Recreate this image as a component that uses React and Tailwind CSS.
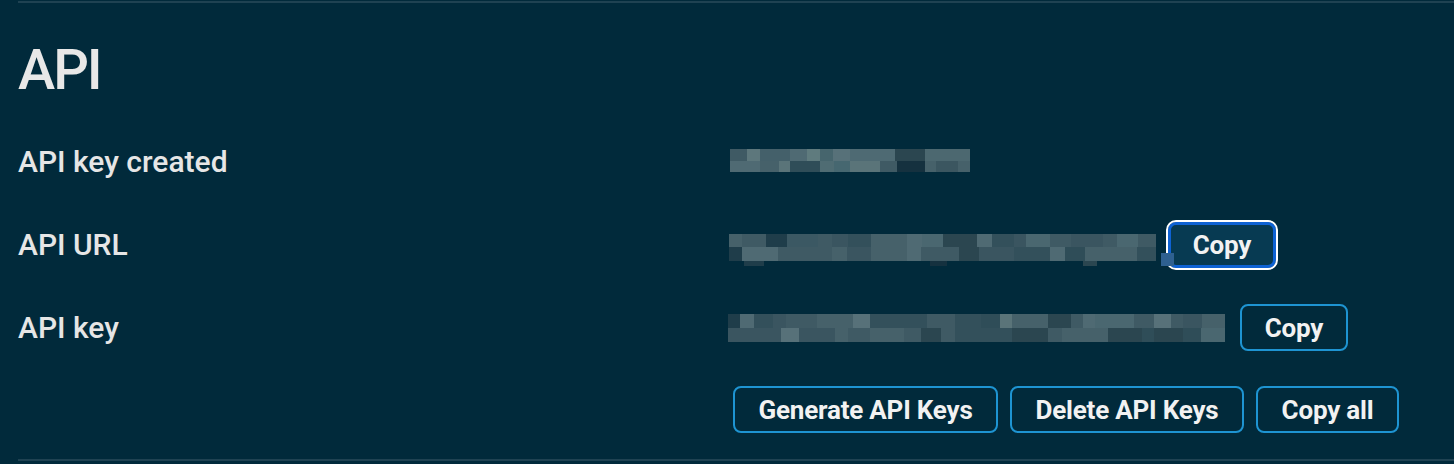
import React from "react";

const R1T = [[30,80,"#3f5a64"],[80,120,"#5d777c"],[120,210,"#44606a"],[210,260,"#4f6a73"],[260,300,"#5f7b7e"],[300,340,"#46656d"],[340,390,"#577179"],[390,525,"#4e6a73"],[525,615,"#2b4650"],[615,750,"#4c6870"]];
const R1B = [[30,120,"#4f6a73"],[120,177,"#46616a"],[177,210,"#5a7479"],[210,300,"#2f4d58"],[300,342,"#4f6c73"],[342,390,"#466770"],[390,480,"#5a7479"],[480,530,"#3f5a64"],[530,615,"#15313f"],[615,648,"#46616a"],[648,713,"#3b5660"],[713,750,"#46616a"]];

const R2T = [[24,63,"#46616a"],[63,135,"#3f5a64"],[135,198,"#1f3d4a"],[198,290,"#3b5863"],[290,333,"#3f5a64"],[333,380,"#3a5560"],[380,450,"#33505b"],[450,557,"#46616a"],[557,602,"#4f6a73"],[602,665,"#4a6770"],[665,768,"#2b4650"],[768,813,"#4f6a73"],[813,878,"#33505b"],[878,915,"#3a5560"],[915,987,"#4a6770"],[987,1050,"#3f5a64"],[1050,1145,"#3a5560"],[1145,1188,"#3f5a64"],[1188,1250,"#4a6770"],[1250,1305,"#3f5a64"]];
const R2B = [[24,63,"#1f3d4a"],[63,170,"#4f6a73"],[170,333,"#3f5a64"],[333,378,"#46616a"],[378,450,"#3a5560"],[450,557,"#46616a"],[557,600,"#4f6a73"],[600,715,"#3f5a64"],[715,773,"#2b4650"],[773,878,"#3a5560"],[878,987,"#33505b"],[987,1032,"#4f6a73"],[1032,1092,"#2f4d58"],[1092,1188,"#46616a"],[1188,1248,"#46616a"],[1248,1305,"#33505b"]];
const R2X = [[24,70,"transparent"],[70,128,"#1f3d4a"],[128,627,"transparent"],[627,677,"#15313f"],[677,1087,"transparent"],[1087,1127,"#2b4650"]];

const R3T = [[24,60,"#1f3d4a"],[60,102,"#4f6a73"],[102,158,"#33505b"],[158,198,"#3a5560"],[198,290,"#3f5a64"],[290,398,"#46616a"],[398,450,"#577179"],[450,620,"#33505b"],[620,705,"#3f5a64"],[705,783,"#33505b"],[783,840,"#2f4d58"],[840,876,"#5a7479"],[876,985,"#46616a"],[985,1053,"#2b4650"],[1053,1089,"#3f5a64"],[1089,1125,"#4f6a73"],[1125,1242,"#4a6770"],[1242,1302,"#3f5a64"],[1302,1353,"#577179"],[1353,1388,"#3f5a64"],[1388,1445,"#3a5560"],[1445,1515,"#46616a"]];
const R3B = [[24,183,"#3a5560"],[183,237,"#577179"],[237,345,"#3a5560"],[345,384,"#46616a"],[384,450,"#3f5a64"],[450,552,"#46616a"],[552,603,"#3f5a64"],[603,663,"#2b4650"],[663,705,"#3f5a64"],[705,876,"#33505b"],[876,984,"#2b4650"],[984,1026,"#3f5a64"],[1026,1164,"#46616a"],[1164,1266,"#2b4650"],[1266,1302,"#2f4d58"],[1302,1388,"#2b4650"],[1388,1443,"#2f4d58"],[1443,1515,"#4a6770"]];

function Strip({ cells, h }) {
  return (
    <div className="flex">
      {cells.map(([a, b, c], i) => (
        <div key={i} style={{ width: (b - a) / 3, height: h, background: c }} />
      ))}
    </div>
  );
}

function Blur({ rows }) {
  return (
    <div className="flex flex-col">
      {rows.map(([cells, h], i) => (
        <Strip key={i} cells={cells} h={h} />
      ))}
    </div>
  );
}

const btn =
  "h-[47px] rounded-[8px] border-2 border-[#1e94d2] text-[26px] font-bold tracking-[-0.2px] text-[#f2f2f2] leading-none flex items-center justify-center";

export default function App() {
  return (
    <div
      className="w-[1454px] h-[464px] bg-[#012a3b] pt-px overflow-hidden"
      style={{ fontFamily: "Roboto, 'Liberation Sans', sans-serif" }}
    >
      <div className="ml-[18px] border-t-2 border-[#1f4252] h-[460px] border-b-2 flex flex-col">
        <h1 className="mt-[39px] text-[56px] leading-[56px] font-medium text-[#e8e8e8] tracking-[-2px]">
          API
        </h1>
        <div className="mt-[22px] flex flex-col text-[30px] font-medium text-[#e6e6e6]">
          <div className="h-[83px] flex items-center">
            <div className="w-[711px]">API key created</div>
            <div className="ml-[1px] mt-[-2px]">
              <Blur rows={[[R1T, 12], [R1B, 11]]} />
            </div>
          </div>
          <div className="h-[83px] flex items-center">
            <div className="w-[711px]">API URL</div>
            <div className="mt-[10px]">
              <Blur rows={[[R2T, 13], [R2B, 14], [R2X, 5]]} />
            </div>
            <div className="relative ml-[12px]">
              <button className="h-[46px] w-[108px] rounded-[8px] border-[3px] border-[#0e62d4] bg-[#073a52] outline-2 outline-white text-[26px] font-bold tracking-[-0.2px] text-[#f2f2f2] leading-none flex items-center justify-center">
                Copy
              </button>
              <div className="absolute left-[-7px] top-[31px] w-[13px] h-[13px] bg-[#2e6090]" />
            </div>
          </div>
          <div className="h-[83px] flex items-center">
            <div className="w-[710px]">API key</div>
            <div className="mt-[1px]">
              <Blur rows={[[R3T, 14], [R3B, 14]]} />
            </div>
            <button className={btn + " ml-[15px] h-[46px] w-[108px]"}>Copy</button>
          </div>
          <div className="h-[83px] flex items-center pl-[715px] gap-3 -mt-[1px]">
            <button className={btn + " w-[265px]"}>Generate API Keys</button>
            <button className={btn + " w-[234px]"}>Delete API Keys</button>
            <button className={btn + " w-[143px]"}>Copy all</button>
          </div>
        </div>
      </div>
    </div>
  );
}
